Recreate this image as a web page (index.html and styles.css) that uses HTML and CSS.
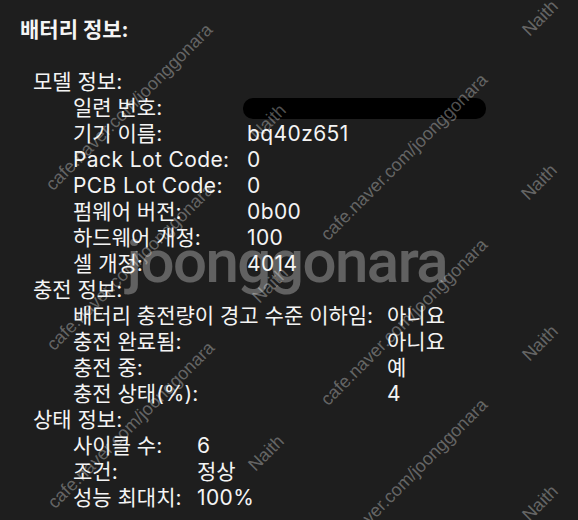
FILE: index.html
```html
<!DOCTYPE html>
<html lang="ko">
<head>
<meta charset="utf-8">
<title>배터리 정보</title>
<link rel="stylesheet" href="styles.css">
</head>
<body>
<main class="panel">
  <h1 class="title">배터리 정보:</h1>

  <section class="group">
    <div class="group-title">모델 정보:</div>
    <dl class="props props-model">
      <dt>일련 번호:</dt><dd><span class="redact"></span></dd>
      <dt>기기 이름:</dt><dd class="latin">bq40z651</dd>
      <dt class="latin">Pack Lot Code:</dt><dd class="latin">0</dd>
      <dt class="latin">PCB Lot Code:</dt><dd class="latin">0</dd>
      <dt>펌웨어 버전:</dt><dd class="latin">0b00</dd>
      <dt>하드웨어 개정:</dt><dd class="latin">100</dd>
      <dt>셀 개정:</dt><dd class="latin">4014</dd>
    </dl>
  </section>

  <section class="group">
    <div class="group-title">충전 정보:</div>
    <dl class="props props-charge">
      <dt>배터리 충전량이 경고 수준 이하임:</dt><dd>아니요</dd>
      <dt>충전 완료됨:</dt><dd>아니요</dd>
      <dt>충전 중:</dt><dd>예</dd>
      <dt>충전 상태(%):</dt><dd class="latin">4</dd>
    </dl>
  </section>

  <section class="group">
    <div class="group-title">상태 정보:</div>
    <dl class="props props-health">
      <dt>사이클 수:</dt><dd class="latin">6</dd>
      <dt>조건:</dt><dd>정상</dd>
      <dt>성능 최대치:</dt><dd class="latin">100%</dd>
    </dl>
  </section>
</main>

<div class="watermarks" aria-hidden="true">
  <span class="wm-big">joonggonara</span>
  <span class="wm-url wm-u1">cafe.naver.com/joonggonara</span>
  <span class="wm-url wm-u2">cafe.naver.com/joonggonara</span>
  <span class="wm-url wm-u3">cafe.naver.com/joonggonara</span>
  <span class="wm-url wm-u4">cafe.naver.com/joonggonara</span>
  <span class="wm-url wm-u5">cafe.naver.com/joonggonara</span>
  <span class="wm-url wm-u6">cafe.naver.com/joonggonara</span>
  <span class="wm-name wm-n1">Naith</span>
  <span class="wm-name wm-n2">Naith</span>
  <span class="wm-name wm-n3">Naith</span>
  <span class="wm-name wm-n4">Naith</span>
  <span class="wm-name wm-n5">Naith</span>
  <span class="wm-name wm-n6">Naith</span>
  <span class="wm-name wm-n7">Naith</span>
</div>
</body>
</html>
```

FILE: styles.css
```css
html, body {
  margin: 0;
  padding: 0;
  background: #1e1e1e;
  width: 578px;
  height: 520px;
  overflow: hidden;
}

body {
  position: relative;
  color: #f4f4f4;
  font-family: "Inter", "Noto Sans CJK KR", sans-serif;
  font-size: 21px;
  line-height: 26px;
}

.panel {
  padding: 17px 0 0 20px;
}

.title {
  margin: 0 0 26px 0;
  font-size: 21px;
  font-weight: 700;
  line-height: 26px;
}

.group {
  padding-left: 13px;
}

.props {
  display: grid;
  margin: 0;
  padding-left: 40px;
}

.props dt,
.props dd {
  margin: 0;
  white-space: nowrap;
}

.props .latin {
  letter-spacing: 0.4px;
}

.props-model { grid-template-columns: 174px auto; }
.props-charge { grid-template-columns: 314px auto; }
.props-health { grid-template-columns: 124px auto; }

.redact {
  display: inline-block;
  width: 243px;
  height: 21px;
  margin-left: -4px;
  border-radius: 10px;
  background: #000;
  vertical-align: -4px;
}

/* watermarks overlay */
.watermarks {
  position: absolute;
  inset: 0;
  pointer-events: none;
  overflow: hidden;
}

.watermarks span {
  position: absolute;
  white-space: nowrap;
  font-family: "Liberation Sans", Arial, sans-serif;
  line-height: 1;
  transform: translate(-50%, -50%) rotate(-45deg);
}

.wm-url,
.wm-name {
  font-size: 18px;
  color: rgba(255, 255, 255, 0.32);
}

.watermarks .wm-big {
  left: 287px;
  top: 262px;
  font-family: "Roboto", "Liberation Sans", sans-serif;
  font-weight: 500;
  font-size: 60px;
  letter-spacing: -1.5px;
  color: rgba(255, 255, 255, 0.3);
  transform: translate(-50%, -50%);
}

.wm-u1 { left: 129px; top: 107px; }
.wm-u2 { left: 130px; top: 267px; }
.wm-u3 { left: 131px; top: 425px; }
.wm-u4 { left: 404px; top: 157px; }
.wm-u5 { left: 404px; top: 322px; }
.wm-u6 { left: 404px; top: 482px; }

.wm-n1 { left: 540px; top: 18px; }
.wm-n2 { left: 539px; top: 182px; }
.wm-n3 { left: 540px; top: 343px; }
.wm-n4 { left: 540px; top: 503px; }
.wm-n5 { left: 268px; top: 122px; }
.wm-n6 { left: 270px; top: 285px; }
.wm-n7 { left: 266px; top: 453px; }
```
